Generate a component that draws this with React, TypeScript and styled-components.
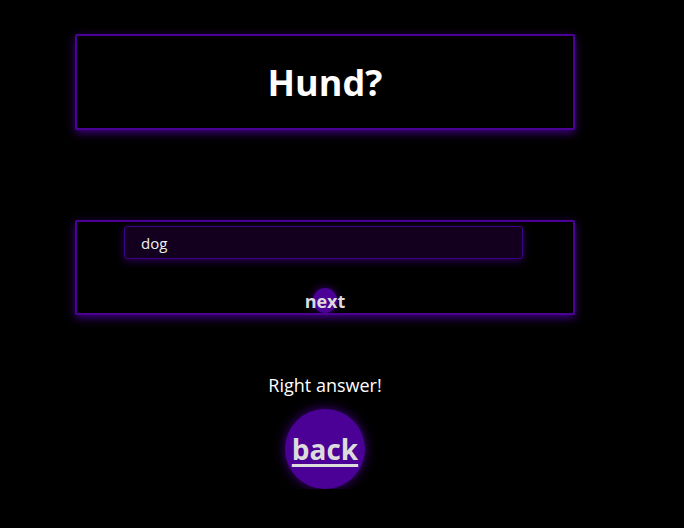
import React from "react";
import styled, { createGlobalStyle } from "styled-components";

const Global = createGlobalStyle`
  html, body { margin: 0; padding: 0; background: #000; }
  body { font-family: "Open Sans", "Noto Sans", sans-serif; color: #fff; }
`;

const Page = styled.div`
  width: 500px;
  margin-left: 75px;
  padding-top: 34px;
  display: flex;
  flex-direction: column;
  align-items: center;
`;

const Card = styled.div<{ $h: number; $mt?: number }>`
  box-sizing: border-box;
  width: 500px;
  height: ${(p) => p.$h}px;
  margin-top: ${(p) => p.$mt ?? 0}px;
  border: 2px solid #4b0096;
  border-radius: 2px;
  box-shadow: 0 3px 10px rgba(75, 0, 150, 0.85);
  background: #000;
  display: flex;
  flex-direction: column;
  align-items: center;
`;

const Title = styled.h1`
  margin: 0;
  flex: 1;
  display: flex;
  align-items: center;
  font-size: 36px;
  font-weight: 700;
  color: #fff;
  padding-top: 1px;
`;

const Input = styled.input`
  box-sizing: border-box;
  margin-top: 4px;
  margin-right: 3px;
  width: 399px;
  height: 33px;
  padding: 0 16px;
  background: #12001e;
  border: 1px solid #3e0088;
  border-radius: 3px;
  box-shadow: 0 2px 8px rgba(75, 0, 150, 0.6);
  color: #f0f0f0;
  font-family: "Open Sans", "Noto Sans", sans-serif;
  font-size: 15px;
  outline: none;
`;

const NextButton = styled.button`
  margin-top: 29px;
  width: 24px;
  height: 25px;
  border-radius: 50%;
  border: none;
  padding: 0;
  background: #4b0096;
  box-shadow: 0 0 8px rgba(75, 0, 150, 0.8);
  display: flex;
  justify-content: center;
  align-items: flex-end;
  overflow: visible;
  cursor: pointer;
  color: #dcdcdc;
  font-family: "Open Sans", "Noto Sans", sans-serif;
  font-size: 18px;
  font-weight: 700;
  line-height: 1;
  & span { margin-bottom: 3px; }
`;

const Message = styled.p`
  margin: 60px 0 0;
  font-size: 18px;
  color: #fff;
  line-height: 1.2;
`;

const BackButton = styled.a`
  margin-top: 12px;
  width: 80px;
  height: 80px;
  border-radius: 50%;
  background: #4b0096;
  box-shadow: 0 0 12px rgba(75, 0, 150, 0.9);
  display: flex;
  align-items: center;
  justify-content: center;
  color: #dcdcdc;
  font-size: 28px;
  font-weight: 700;
  text-decoration: underline;
  text-decoration-thickness: 3px;
  text-underline-offset: 4px;
  cursor: pointer;
`;

export default function App() {
  return (
    <>
      <Global />
      <Page>
        <Card $h={96}>
          <Title>Hund?</Title>
        </Card>
        <Card $h={95} $mt={90}>
          <Input defaultValue="dog" />
          <NextButton>
            <span>next</span>
          </NextButton>
        </Card>
        <Message>Right answer!</Message>
        <BackButton>back</BackButton>
      </Page>
    </>
  );
}
